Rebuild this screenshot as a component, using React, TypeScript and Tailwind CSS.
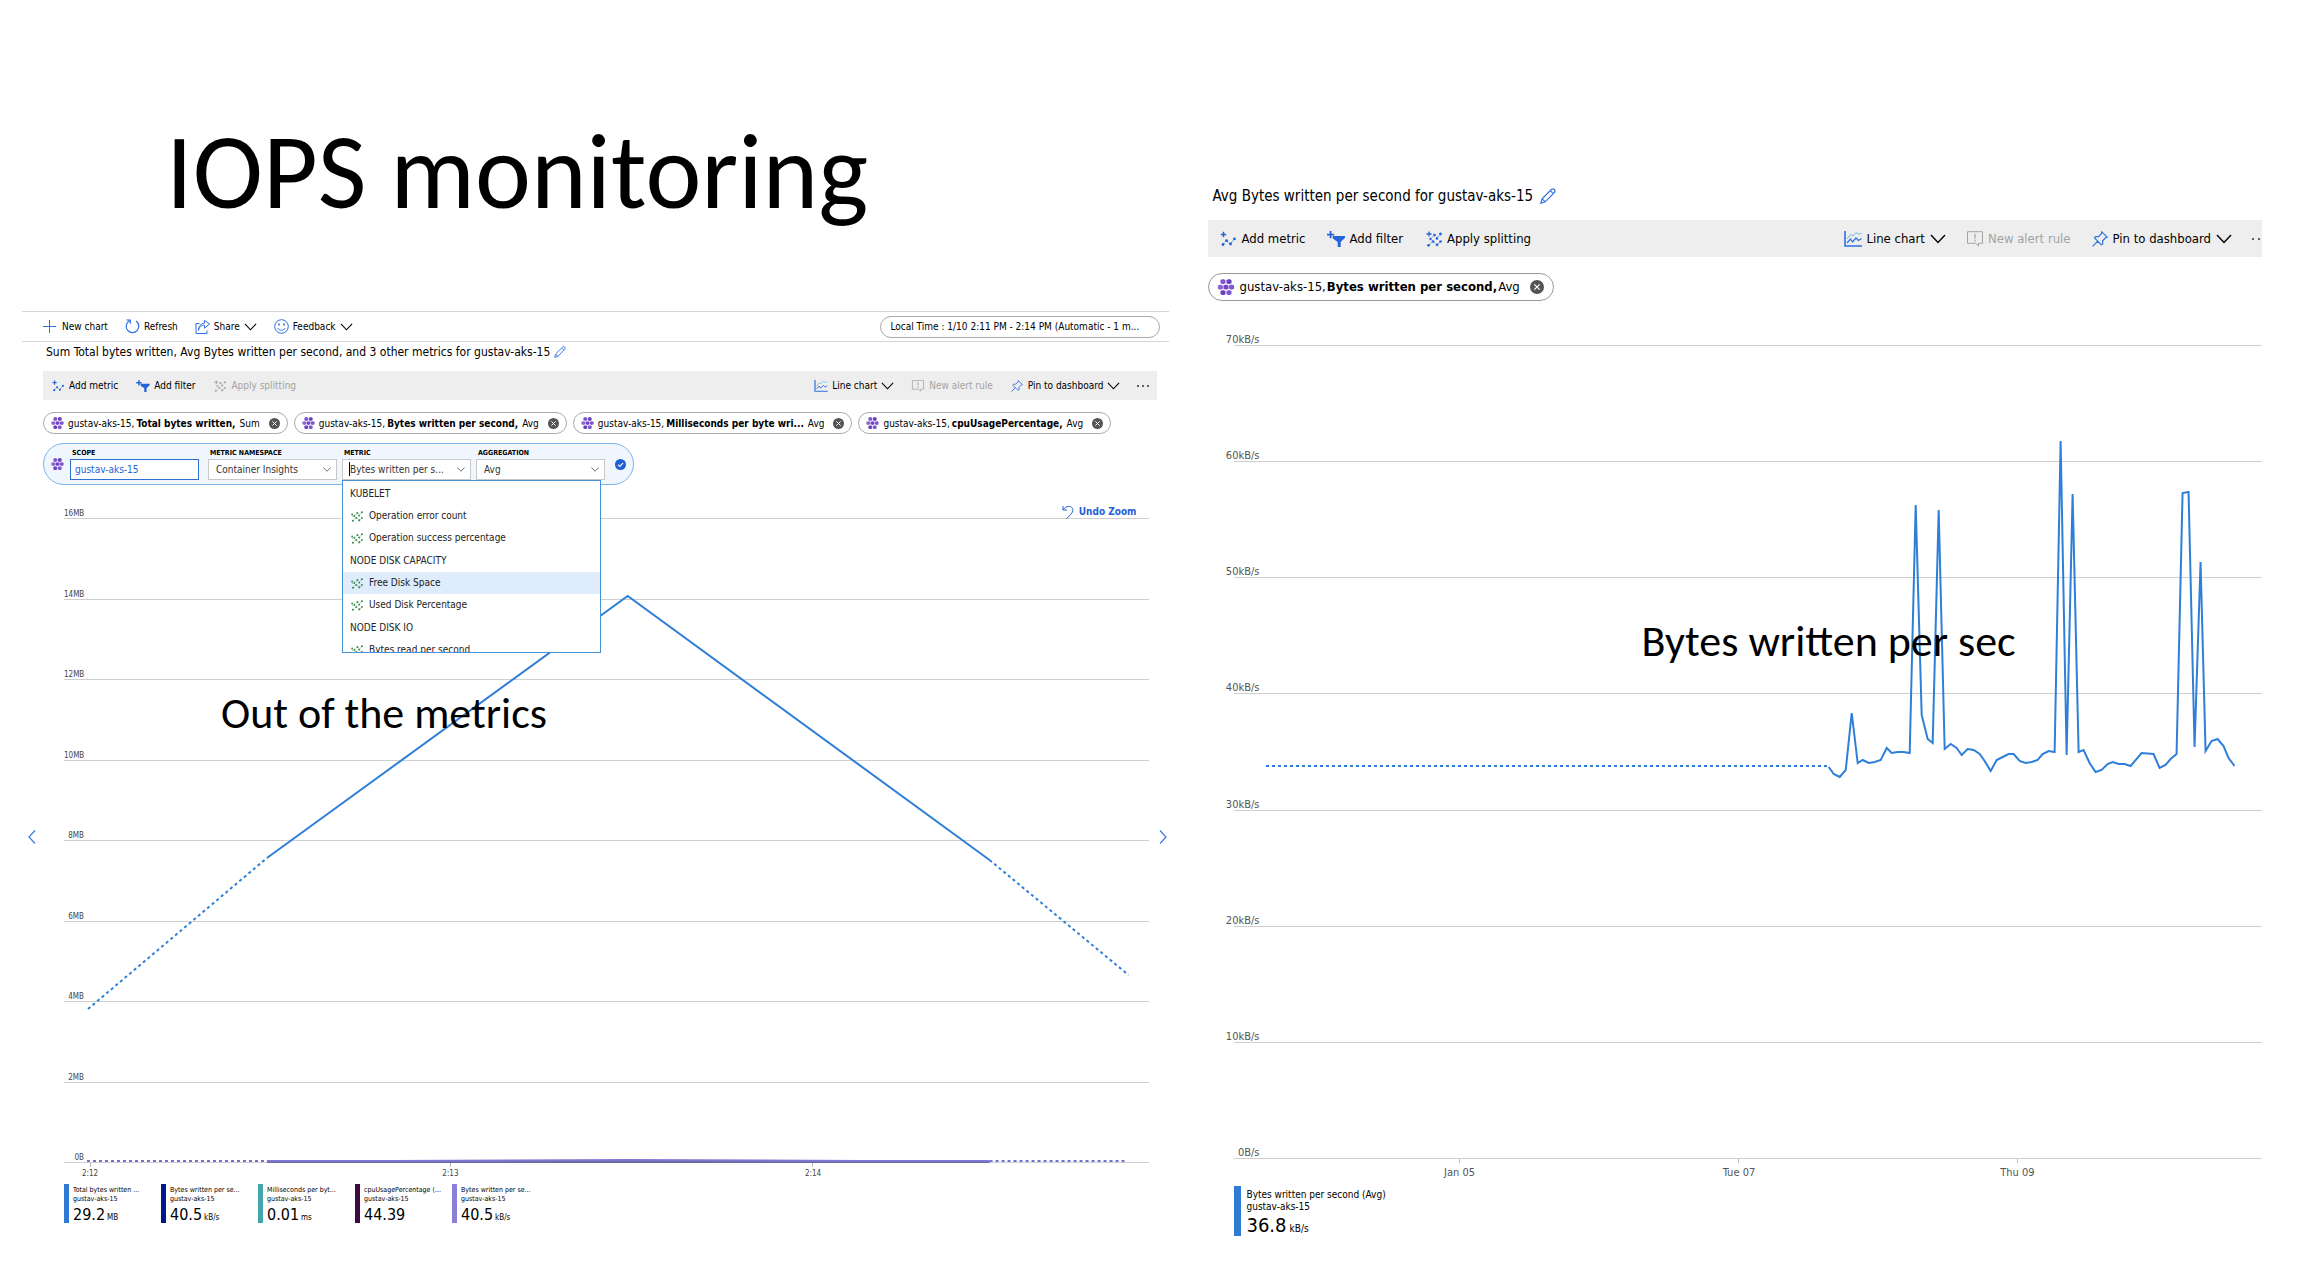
import React from "react";

const BLUE = "#2f7fd8";

type IconProps = { className?: string };

function MetricPlus({ className = "" }: IconProps) {
  return (
    <svg viewBox="0 0 16 16" className={className} fill="none" stroke="currentColor" aria-hidden="true">
      <path d="M3.5 0.8v5.4M0.8 3.5h5.4" strokeWidth="1.5" />
      <path d="M3 13.5l3.5-4 4 3.5 4-5.5" strokeWidth="0.9" strokeDasharray="2 1" />
      <g fill="currentColor" stroke="none">
        <circle cx="3" cy="13.5" r="1.4" />
        <circle cx="6.6" cy="9.6" r="1.4" />
        <circle cx="10.5" cy="13" r="1.4" />
        <circle cx="14.5" cy="7.8" r="1.4" />
      </g>
    </svg>
  );
}

function FilterPlus({ className = "" }: IconProps) {
  return (
    <svg viewBox="0 0 18 16" className={className} fill="currentColor" aria-hidden="true">
      <path d="M2.7 0h1.8v2.7h2.7v1.8H4.5v2.7H2.7V4.5H0V2.7h2.7z" />
      <path d="M5.8 5H18v1.8L13.7 11v5h-3v-5L5.8 7.5z" />
    </svg>
  );
}

function SplitDots({ className = "", plus = true }: IconProps & { plus?: boolean }) {
  return (
    <svg viewBox="0 0 16 16" className={className} fill="none" stroke="currentColor" aria-hidden="true">
      {plus && <path d="M3 0.5v5M0.5 3h5" strokeWidth="1.3" />}
      <path d="M3 14.3L7 10l4 4 3.5-3.5M5 7.500l3.500-3.500L11 7l3.500-4" strokeWidth="0.8" strokeDasharray="1.5 1" />
      {!plus && <path d="M1.500 9L5 5.500" strokeWidth="0.8" strokeDasharray="1.5 1" />}
      <g fill="currentColor" stroke="none">
        {!plus && <circle cx="1.500" cy="6" r="1.200" />}
        <circle cx="8.500" cy="4" r="1.300" />
        <circle cx="4.500" cy="8" r="1.200" />
        <circle cx="11" cy="7.500" r="1.300" />
        <circle cx="14.500" cy="3" r="1.400" />
        <circle cx="2.500" cy="14.300" r="1.400" />
        <circle cx="7" cy="10.500" r="1.300" />
        <circle cx="11" cy="13.800" r="1.400" />
        <circle cx="14.500" cy="10.500" r="1.300" />
      </g>
    </svg>
  );
}

function LineChartIcon({ className = "" }: IconProps) {
  return (
    <svg viewBox="0 0 18 16" className={className} fill="none" aria-hidden="true">
      <path d="M1 0v15h17" stroke="#2f6fe0" strokeWidth="1.6" />
      <path d="M3 8l3.5-4.5L9 5l3-3.5 2 1.5 3.5-.5" stroke="#6db9e8" strokeWidth="1" />
      <path d="M3 12l3.5-4 2 3L12 7l2.5 2.500 3-2" stroke="#2f6fe0" strokeWidth="1.2" />
    </svg>
  );
}

function AlertIcon({ className = "" }: IconProps) {
  return (
    <svg viewBox="0 0 18 16" className={className} fill="none" stroke="currentColor" aria-hidden="true">
      <path d="M1.5 0.7h15v11.6h-4V15l-3-2.7h-8z" />
      <path d="M9 2.8v4.700M9 8.700v1.800" strokeWidth="1.2" />
    </svg>
  );
}

function PinIcon({ className = "" }: IconProps) {
  return (
    <svg viewBox="0 0 16 16" className={className} fill="none" stroke="currentColor" strokeWidth="1.2" aria-hidden="true">
      <path d="M9.8 0.8l5.400 5.400-1.600.6-3 3 .2 3-1.500 1L2.500 7l1-1.500 3 .1 3-3zM5.800 10.200L0.600 15.400" />
    </svg>
  );
}

function PencilIcon({ className = "" }: IconProps) {
  return (
    <svg viewBox="0 0 16 16" className={className} fill="none" stroke="currentColor" strokeWidth="1.200" aria-hidden="true">
      <path d="M0.900 15.200l1.200-4.500L11.600 1.300q1.500-1.100 2.700.2t.2 2.900L5.200 13.800zM10.300 2.700l3 3M2.200 10.800l2.900 2.900" />
    </svg>
  );
}

function Chevron({ className = "" }: IconProps) {
  return (
    <svg viewBox="0 0 16 10" className={className} fill="none" stroke="currentColor" strokeWidth="1.400" aria-hidden="true">
      <path d="M1 1l7 7.500L15 1" />
    </svg>
  );
}

function ClusterIcon({ className = "" }: IconProps) {
  const hex: [number, number, string][] = [
    [5, 2.5, "#7d55cf"],
    [11, 2.5, "#6b40be"],
    [2.4, 8, "#8a63d6"],
    [8, 8, "#7443c4"],
    [13.6, 8, "#7d55cf"],
    [5, 13.5, "#6b40be"],
    [11, 13.5, "#7d55cf"],
  ];
  return (
    <svg viewBox="0 0 16 16" className={className} aria-hidden="true">
      {hex.map(([x, y, c]) => (
        <path key={`${x}-${y}`} fill={c} d={`M${x - 2.5} ${y - 1.6}l2.500-.9 2.500.9v3.400l-2.500.9-2.500-.9z`} />
      ))}
    </svg>
  );
}

function CloseIcon({ className = "" }: IconProps) {
  return (
    <svg viewBox="0 0 14 14" className={className} aria-hidden="true">
      <circle cx="7" cy="7" r="7" fill="#555" />
      <path d="M4.300 4.300l5.400 5.400M9.700 4.300L4.300 9.700" stroke="#fff" strokeWidth="1.200" />
    </svg>
  );
}

function ToolBar({ large = false, splitDisabled = false }: { large?: boolean; splitDisabled?: boolean }) {
  const icon = large ? "h-4 w-[18px]" : "h-3 w-3.5";
  const button = large ? "flex items-center gap-1" : "flex items-center gap-1";
  const chevron = large ? "ml-px h-2.5 w-4" : "h-2 w-[13px]";
  return (
    <div
      className={
        large
          ? "flex h-[37px] items-center justify-between overflow-hidden whitespace-nowrap bg-[#eee] pl-[11px] text-[13px]"
          : "flex h-[29px] items-center justify-between whitespace-nowrap bg-[#eee] pl-2 pr-2 text-[10px]"
      }
    >
      <div className={large ? "flex gap-[22px]" : "flex gap-[18px]"}>
        <button type="button" className={button}>
          <MetricPlus className={`${icon} text-[#2464d8]`} />
          Add metric
        </button>
        <button type="button" className={button}>
          <FilterPlus className={`${icon} text-[#2464d8]`} />
          Add filter
        </button>
        <button type="button" disabled={splitDisabled} className={splitDisabled ? `${button} text-[#a3a3a3]` : button}>
          <SplitDots className={splitDisabled ? icon : `${icon} text-[#2464d8]`} />
          Apply splitting
        </button>
      </div>
      <div className={large ? "flex gap-5" : "flex gap-[17px]"}>
        <button type="button" className={button}>
          <LineChartIcon className={icon} />
          Line chart
          <Chevron className={chevron} />
        </button>
        <button type="button" disabled className={`${button} text-[#a3a3a3]`}>
          <AlertIcon className={icon} />
          New alert rule
        </button>
        <button type="button" className={button}>
          <PinIcon className={`${icon} text-[#2f6fe0]`} />
          Pin to dashboard
          <Chevron className={chevron} />
        </button>
        <button
          type="button"
          aria-label="More options"
          className={large ? "flex w-2.5 items-center gap-1 overflow-hidden" : "flex items-center gap-[3px]"}
        >
          {[0, 1, 2].map((i) => (
            <span key={i} className="size-0.5 shrink-0 rounded-full bg-[#333]" />
          ))}
        </button>
      </div>
    </div>
  );
}

function Chip({ metric, agg, large = false }: { metric: string; agg: string; large?: boolean }) {
  return (
    <div
      className={
        large
          ? "flex h-7 items-center whitespace-nowrap rounded-full border border-[#999] pl-2 pr-[9px] text-[13px]"
          : "flex h-[22px] items-center whitespace-nowrap rounded-full border border-[#aaa] px-[7px] text-[10px]"
      }
    >
      <ClusterIcon className={large ? "mr-1 h-4 w-[18px]" : "mr-1 h-3 w-[13px]"} />
      <span className={large ? "mr-px" : "mr-0.5"}>gustav-aks-15,</span>
      <b className={large ? "mr-px" : "mr-1"}>{metric}</b>
      {agg}
      <button type="button" aria-label={`Remove ${metric}`} className={large ? "ml-2.5" : "ml-[9px]"}>
        <CloseIcon className={large ? "size-[14px]" : "size-[11px]"} />
      </button>
    </div>
  );
}

function YAxis({ labels, large = false }: { labels: string[]; large?: boolean }) {
  return (
    <div className="absolute inset-0 flex flex-col justify-between">
      {labels.map((l) => (
        <div key={l} className="relative h-px bg-[#cfcfcf]">
          <span
            className={
              large
                ? "absolute -left-[9px] bottom-0 w-[34px] text-right text-[11px] leading-3 text-[#555]"
                : "absolute bottom-0 left-0 w-5 text-right text-[8px] leading-[10px] text-[#444]"
            }
          >
            {l}
          </span>
        </div>
      ))}
    </div>
  );
}

function XAxis({ ticks, large = false }: { ticks: [string, number][]; large?: boolean }) {
  return (
    <>
      {ticks.map(([l, at]) => (
        <div key={l} className="absolute top-full flex w-0 flex-col items-center" style={{ left: `${at}%` }}>
          <span className="h-1 w-px shrink-0 bg-[#bbb]" />
          <span className={large ? "whitespace-nowrap text-[11px] leading-5 text-[#555]" : "whitespace-nowrap text-[8px] leading-[14px] text-[#444]"}>
            {l}
          </span>
        </div>
      ))}
    </>
  );
}

function Legend({ color, name, value, unit, large = false }: { color: string; name: string; value: string; unit: string; large?: boolean }) {
  return (
    <li className={large ? "flex gap-[5px]" : "flex w-[97px] gap-1"}>
      <span className={large ? "w-[7px]" : "w-[5px]"} style={{ backgroundColor: color }} />
      <div className="whitespace-nowrap">
        <div className={large ? "pt-0.5 text-[10px] leading-[13px]" : "pt-0.5 text-[7px] leading-[9px]"}>{name}</div>
        <div className={large ? "text-[10px] leading-3" : "text-[7px] leading-[9px]"}>gustav-aks-15</div>
        <div className={large ? "text-[20px] leading-[25px]" : "text-[16px] leading-[22px]"}>
          {value}
          <span className={large ? "ml-[3px] text-[10px]" : "ml-0.5 text-[8px]"}>{unit}</span>
        </div>
      </div>
    </li>
  );
}

const options: { label: string; group?: boolean; active?: boolean }[] = [
  { label: "KUBELET", group: true },
  { label: "Operation error count" },
  { label: "Operation success percentage" },
  { label: "NODE DISK CAPACITY", group: true },
  { label: "Free Disk Space", active: true },
  { label: "Used Disk Percentage" },
  { label: "NODE DISK IO", group: true },
  { label: "Bytes read per second" },
];

const fieldLabel = "pl-0.5 text-[7px] font-bold uppercase leading-[9px]";
const field = "h-[21px] w-[129px] border border-[#c8c8c8] bg-white pl-[7px] text-[10px] text-[#333] outline-none";

function Field({ id, label, children }: { id: string; label: string; children: React.ReactNode }) {
  return (
    <div className="relative flex flex-col gap-px">
      <label htmlFor={id} className={fieldLabel}>
        {label}
      </label>
      {children}
    </div>
  );
}

function MetricPicker() {
  return (
    <div className="relative z-20 mt-[9px] flex h-[42px] w-fit items-center rounded-full border border-[#7fb4ea] bg-[#eff6fd] pl-[7px] pr-[7px]">
      <ClusterIcon className="h-3 w-[13px]" />
      <div className="ml-1.5 mr-2.5 flex gap-[5px]">
        <div className="mr-1">
          <Field id="scope" label="Scope">
            <input id="scope" defaultValue="gustav-aks-15" className="h-[21px] w-[129px] border border-[#2f6fd0] bg-white pl-1 text-[10px] text-[#2464d8] outline-none" />
          </Field>
        </div>
        <Field id="namespace" label="Metric namespace">
          <select id="namespace" className={`${field} appearance-none`}>
            <option>Container Insights</option>
          </select>
          <Chevron className="absolute bottom-2 right-1.5 h-[5px] w-2 text-[#333]" />
        </Field>
        <Field id="metric" label="Metric">
          <input id="metric" role="combobox" aria-expanded="true" aria-controls="metric-options" defaultValue="Bytes written per s..." className={field} />
          <span className="absolute bottom-1 left-[7px] h-3.5 w-px bg-black" />
          <Chevron className="absolute bottom-2 right-1.5 h-[5px] w-2 text-[#333]" />
          <ul id="metric-options" role="listbox" aria-label="Metric" className="absolute left-0 top-full h-[173px] w-[259px] overflow-hidden border border-[#4a90d9] bg-white pt-px text-[10px] text-[#222]">
            {options.map((o) =>
              o.group ? (
                <li key={o.label} role="presentation" className="flex h-[23px] items-center pl-[7px]">
                  {o.label}
                </li>
              ) : (
                <li
                  key={o.label}
                  role="option"
                  aria-selected={!!o.active}
                  className={o.active ? "flex h-[22px] items-center gap-1.5 bg-[#deecfb] pl-2" : "flex h-[22px] items-center gap-1.5 pl-2"}
                >
                  <SplitDots plus={false} className="size-3 text-[#3b8a4f]" />
                  {o.label}
                </li>
              )
            )}
          </ul>
        </Field>
        <Field id="aggregation" label="Aggregation">
          <select id="aggregation" className={`${field} appearance-none`}>
            <option>Avg</option>
          </select>
          <Chevron className="absolute bottom-2 right-1.5 h-[5px] w-2 text-[#333]" />
        </Field>
      </div>
      <button type="button" aria-label="Apply metric">
        <svg viewBox="0 0 14 14" className="size-[11px]" aria-hidden="true">
          <circle cx="7" cy="7" r="7" fill="#1f5fd6" />
          <path d="M3.800 7.200l2.300 2.300 4.200-4.600" fill="none" stroke="#fff" strokeWidth="1.300" />
        </svg>
      </button>
    </div>
  );
}

function Line({ points, dotted = false, color = BLUE, width = 2 }: { points: string; dotted?: boolean; color?: string; width?: number }) {
  return (
    <polyline
      points={points}
      fill="none"
      stroke={color}
      strokeWidth={width}
      strokeDasharray={dotted ? "3 3" : undefined}
      vectorEffect="non-scaling-stroke"
    />
  );
}

function StepButton({ label, d }: { label: string; d: string }) {
  return (
    <button type="button" aria-label={label} className="mb-2 text-[#3b78e0]">
      <svg viewBox="0 0 8 14" className="h-3.5 w-2" fill="none" stroke="currentColor" strokeWidth="1.200" aria-hidden="true">
        <path d={d} />
      </svg>
    </button>
  );
}

function TotalBytesChart() {
  return (
    <div className="mt-[33px] flex items-center justify-between pl-1.5 pr-0.5">
      <StepButton label="Previous period" d="M7 0.500L1 7l6 6.500" />
      <div className="relative ml-7 mr-2.5 h-[645px] flex-1">
        <YAxis labels={["16MB", "14MB", "12MB", "10MB", "8MB", "6MB", "4MB", "2MB", "0B"]} />
        <svg viewBox="0 0 1086 645" preserveAspectRatio="none" className="absolute inset-0 size-full overflow-visible" role="img" aria-label="Total bytes written over time">
          <Line points="24,491 203,340" dotted />
          <Line points="203,340 564,78 926,342" />
          <Line points="926,342 1065,457" dotted />
          <Line points="23,643 203,643" dotted color="#7a6fd0" />
          <Line points="203,644 926,644" color="#6a6a9c" />
          <Line points="203,643 330,643 564,642 800,643 926,643" color="#7f77d6" />
          <Line points="926,643 1064,643" dotted color="#6f74d0" />
        </svg>
        <XAxis ticks={[["2:12", 2.4], ["2:13", 35.6], ["2:14", 69]]} />
        <button type="button" className="absolute -top-[13px] right-[13px] flex items-center gap-[5px] text-[10px] font-bold leading-[14px] text-[#1f5fd6]">
          <svg viewBox="0 0 12 14" className="h-3.5 w-3" fill="none" stroke="currentColor" aria-hidden="true">
            <path d="M1 1v4h4M1.200 4.800C4 0.500 9 0.500 10.500 3.500S9 9.500 4.500 13.500" />
          </svg>
          Undo Zoom
        </button>
        <p className="absolute left-[157px] top-[168px] whitespace-nowrap font-['Carlito','Lato',sans-serif] text-[44px] leading-[54px]">Out of the metrics</p>
      </div>
      <StepButton label="Next period" d="M1 0.500L7 7l-6 6.500" />
    </div>
  );
}

const bytesPerSecond =
  "595,422 600,429 606,432 612,425 618,368 624,418 629,415 635,418 641,417 647,415 653,403 658,408 664,407 670,407 676,408 682,160 688,370 694,394 699,398 705,165 711,404 717,399 723,403 728,410 734,404 740,405 746,409 751,416 757,426 763,415 769,412 775,409 780,409 786,416 792,418 798,417 804,415 809,409 815,406 821,407 827,96 833,410 839,149 845,407 850,405 856,418 862,427 868,425 874,419 879,417 885,419 891,419 897,421 908,408 920,409 926,423 932,420 937,414 943,409 949,148 955,147 961,402 967,217 972,406 978,396 984,394 990,401 995,413 1001,421";

function BytesPerSecondChart() {
  return (
    <div className="relative ml-[26px] mt-11 h-[814px]">
      <YAxis large labels={["70kB/s", "60kB/s", "50kB/s", "40kB/s", "30kB/s", "20kB/s", "10kB/s", "0B/s"]} />
      <svg viewBox="0 0 1028 814" preserveAspectRatio="none" className="absolute inset-0 size-full" role="img" aria-label="Bytes written per second over time">
        <Line points="32,421 595,421" dotted />
        <Line points={bytesPerSecond} />
      </svg>
      <XAxis large ticks={[["Jan 05", 21.9], ["Tue 07", 49.1], ["Thu 09", 76.2]]} />
      <p className="absolute left-[407px] top-[269px] whitespace-nowrap font-['Carlito','Lato',sans-serif] text-[44px] leading-[54px]">Bytes written per sec</p>
    </div>
  );
}

export default function App() {
  return (
    <main className="grid min-h-screen grid-cols-[1148fr_1054fr] gap-[39px] bg-white pl-[22px] pr-[42px] font-['DejaVu_Sans_Condensed','DejaVu_Sans',sans-serif] text-black">
      <section>
        <h1 className="ml-36 mt-[119px] font-['Carlito','Lato',sans-serif] text-[106px] leading-[106px]">IOPS monitoring</h1>
        <div className="mt-[86px] flex h-[31px] items-center justify-between whitespace-nowrap border-y border-[#d6d6d6] pl-[21px] pr-[9px] text-[10px]">
          <div className="flex gap-[17px]">
            <button type="button" className="flex items-center gap-1.5">
              <svg viewBox="0 0 13 13" className="size-[13px] text-[#2f6fe0]" stroke="currentColor" aria-hidden="true">
                <path d="M6.500 0v13M0 6.500h13" />
              </svg>
              New chart
            </button>
            <button type="button" className="flex items-center gap-1">
              <svg viewBox="0 0 15 15" className="size-[15px] text-[#2f6fe0]" fill="none" stroke="currentColor" strokeWidth="1.200" aria-hidden="true">
                <path d="M4.500 1.800a6.300 6.300 0 1 0 6.500.3M1.500 1h3.800v3.800" />
              </svg>
              Refresh
            </button>
            <button type="button" className="flex items-center gap-1">
              <svg viewBox="0 0 15 14" className="h-3.5 w-[15px] text-[#2f6fe0]" fill="none" stroke="currentColor" aria-hidden="true">
                <path d="M4.500 3.500H1v10h11v-3M3.500 10.500c.6-3.800 3-5.300 6-5.300V8.200l5-4.200-5-3.500v2.700c-3.700.3-6 3-6 7.300z" />
              </svg>
              Share
              <Chevron className="h-2 w-[13px]" />
            </button>
            <button type="button" className="flex items-center gap-1">
              <svg viewBox="0 0 15 15" className="size-[15px] text-[#2f6fe0]" fill="none" stroke="currentColor" aria-hidden="true">
                <circle cx="7.500" cy="7.500" r="6.800" />
                <path d="M3.800 9c1 3 6.400 3 7.400 0" />
                <path d="M5 4.500v2M10 4.500v2" strokeWidth="1.600" />
              </svg>
              Feedback
              <Chevron className="h-2 w-[13px]" />
            </button>
          </div>
          <button type="button" className="h-[22px] w-[280px] rounded-full border border-[#aaa] pl-[9px] text-left">
            Local Time : 1/10 2:11 PM - 2:14 PM (Automatic - 1 m...
          </button>
        </div>
        <div className="pl-[21px] pr-3">
          <h2 className="ml-[3px] mt-0.5 flex h-4 items-center gap-1 text-[12px]">
            Sum Total bytes written, Avg Bytes written per second, and 3 other metrics for gustav-aks-15
            <button type="button" aria-label="Edit title">
              <PencilIcon className="size-3 text-[#2f6fe0]" />
            </button>
          </h2>
          <div className="mt-[11px]">
            <ToolBar splitDisabled />
          </div>
          <div className="mt-3 flex gap-1.5">
            <Chip metric="Total bytes written," agg="Sum" />
            <Chip metric="Bytes written per second," agg="Avg" />
            <Chip metric="Milliseconds per byte wri..." agg="Avg" />
            <Chip metric="cpuUsagePercentage," agg="Avg" />
          </div>
          <MetricPicker />
        </div>
        <TotalBytesChart />
        <ul className="ml-[42px] mt-[21px] flex h-[39px]">
          <Legend color="#2f7bd3" name="Total bytes written ..." value="29.2" unit="MB" />
          <Legend color="#00188f" name="Bytes written per se..." value="40.5" unit="kB/s" />
          <Legend color="#45a5ad" name="Milliseconds per byt..." value="0.01" unit="ms" />
          <Legend color="#3f0a3f" name="cpuUsagePercentage (..." value="44.39" unit="" />
          <Legend color="#8b80d8" name="Bytes written per se..." value="40.5" unit="kB/s" />
        </ul>
      </section>
      <section>
        <h2 className="ml-1 mt-[186px] flex h-5 items-center gap-[7px] text-[15px]">
          Avg Bytes written per second for gustav-aks-15
          <button type="button" aria-label="Edit title">
            <PencilIcon className="size-4 text-[#2f6fe0]" />
          </button>
        </h2>
        <div className="mt-3.5">
          <ToolBar large />
        </div>
        <div className="mt-4 flex">
          <Chip large metric="Bytes written per second," agg="Avg" />
        </div>
        <BytesPerSecondChart />
        <ul className="ml-[26px] mt-[27px] flex h-[50px]">
          <Legend large color="#2f7bd3" name="Bytes written per second (Avg)" value="36.8" unit="kB/s" />
        </ul>
      </section>
    </main>
  );
}
